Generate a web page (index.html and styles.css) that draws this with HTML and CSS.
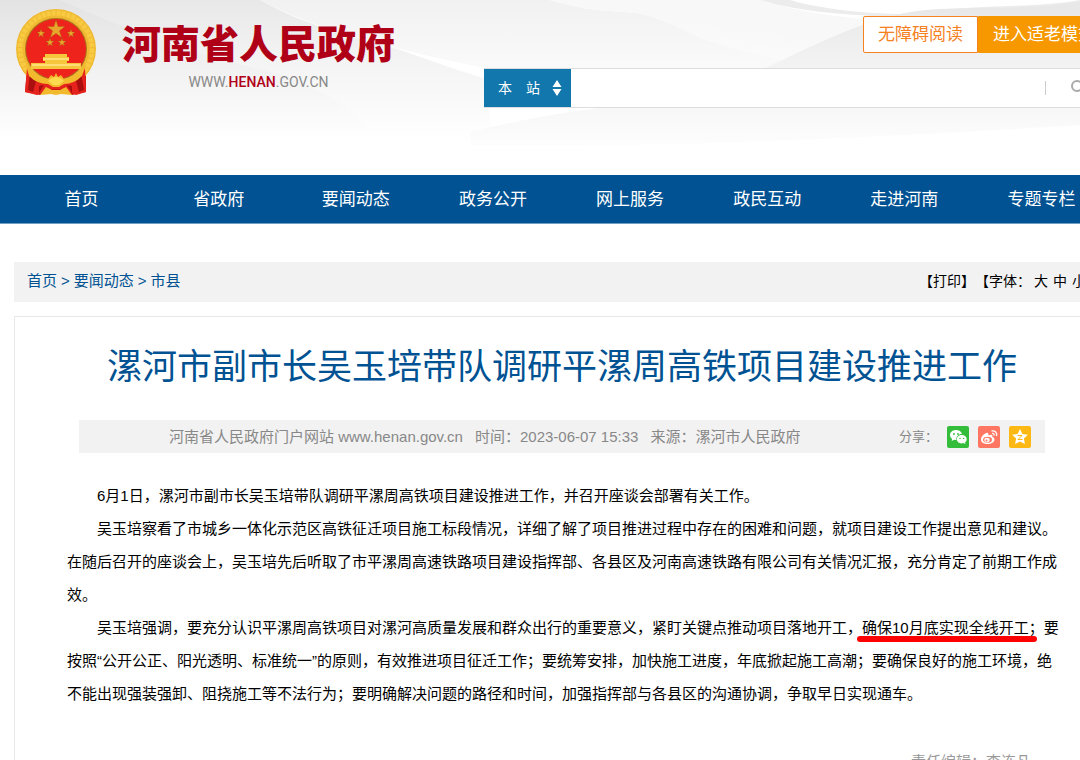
FILE: index.html
```html
<!DOCTYPE html>
<html lang="zh-CN">
<head>
<meta charset="utf-8">
<meta name="viewport" content="width=device-width, initial-scale=1">
<title>漯河市副市长吴玉培带队调研平漯周高铁项目建设推进工作</title>
<link rel="stylesheet" href="styles.css">
</head>
<body>
<header class="site-header">
  <svg class="header-bg" viewBox="0 0 1080 175" preserveAspectRatio="none" aria-hidden="true">
    <defs>
      <linearGradient id="g1" gradientUnits="userSpaceOnUse" x1="0" y1="0" x2="0" y2="140"><stop offset="0" stop-color="#e3e3e3"/><stop offset=".45" stop-color="#f0f0f0"/><stop offset="1" stop-color="#fff"/></linearGradient>
      <linearGradient id="g2" gradientUnits="userSpaceOnUse" x1="0" y1="0" x2="0" y2="140"><stop offset="0" stop-color="#e8e8e8"/><stop offset=".45" stop-color="#f4f4f4"/><stop offset="1" stop-color="#fff"/></linearGradient>
      <linearGradient id="g3" gradientUnits="userSpaceOnUse" x1="0" y1="0" x2="0" y2="90"><stop offset="0" stop-color="#f1f1f1"/><stop offset="1" stop-color="#fdfdfd"/></linearGradient>
      <linearGradient id="g4" gradientUnits="userSpaceOnUse" x1="550" y1="0" x2="540" y2="70"><stop offset="0" stop-color="#f8f8f8"/><stop offset="1" stop-color="#fff"/></linearGradient>
      <linearGradient id="g5" gradientUnits="userSpaceOnUse" x1="0" y1="8" x2="0" y2="72"><stop offset="0" stop-color="#e8e8e8"/><stop offset="1" stop-color="#f4f4f4"/></linearGradient>
      <linearGradient id="g6" gradientUnits="userSpaceOnUse" x1="0" y1="107" x2="0" y2="146"><stop offset="0" stop-color="#f7f7f7"/><stop offset="1" stop-color="#fdfdfd"/></linearGradient>
    </defs>
    <path fill="url(#g2)" d="M0 0H260C310 28 360 38 400 50C430 60 455 70 490 80V140H0Z"/>
    <path fill="url(#g1)" d="M0 0H60C130 32 210 58 270 72C310 82 350 105 380 140H0Z"/>
    <path fill="url(#g3)" d="M260 0H550C575 8 600 11 625 12C660 14 680 30 710 41C750 54 790 60 820 68H484C440 58 330 38 260 0Z"/>
    <path fill="url(#g4)" d="M550 0H760C800 12 840 18 880 20L850 68H820C780 60 740 52 710 41C680 30 660 14 625 12C600 11 575 8 550 0Z"/>
    <path fill="#ececec" d="M760 0H1080V3C1030 10 960 5 885 17C840 14 800 12 760 0Z"/>
    <path fill="#fff" d="M790 0H1080C1030 9 960 4 900 14C860 13 820 9 790 0Z"/>
    <path fill="url(#g5)" d="M765 68C830 38 880 11 940 9C1000 7 1040 8 1080 2V68Z"/>
    <path fill="url(#g6)" d="M470 132C520 120 560 113 605 107H1080V125C900 136 700 147 472 146Z"/>
  </svg>
  <div class="header-inner">
    <a class="brand" href="#">
      <svg class="emblem" viewBox="0 0 82 88" role="img" aria-label="国徽">
        <path fill="#c91512" d="M12 61L10 84L25 87L31 83L51 83L57 87L71 84L71 61Z"/>
        <circle cx="41" cy="41" r="40" fill="#f0b932"/>
        <circle cx="41" cy="41" r="36" fill="none" stroke="#f8ca42" stroke-width="5" stroke-dasharray="4 1"/>
        <circle cx="41" cy="41" r="31" fill="#a8741d"/>
        <circle cx="41" cy="41" r="30" fill="#ee241c"/>
        <g fill="#e8a52c" stroke="#a64b12" stroke-width=".4">
          <path d="M41 12L43.200 18.600H50L44.500 22.800L46.600 29.500L41 25.400L35.400 29.500L37.500 22.800L32 18.600H38.800Z"/>
          <path d="M26 21l1 3h3.200l-2.600 2 1 3-2.600-1.800-2.600 1.800 1-3-2.600-2H25zM56 21l1 3h3.200l-2.600 2 1 3-2.600-1.800-2.600 1.800 1-3-2.600-2H55zM35 30l1 3h3.200l-2.600 2 1 3-2.600-1.800-2.600 1.800 1-3-2.600-2H34zM47 30l1 3h3.200l-2.600 2 1 3-2.600-1.800-2.600 1.800 1-3-2.600-2H46z"/>
        </g>
        <path fill="#f6c63d" d="M30 46H52V49H54V53H52V55H66V61H16V55H30V53H28V49H30Z"/>
        <path fill="#ffdf75" d="M28 50H54V52H28ZM17 56H65V58H17Z"/>
        <path fill="#e5221b" d="M12 60L21 70L34 76H48L61 70L70 60L71 84L61 87L49 81H33L22 87L10 84Z"/>
        <path fill="#a90f0f" d="M15 65L21 73L18 84L13 82ZM66 65L61 73L64 84L69 82ZM24 78L29 77L24 85ZM57 78L52 77L57 85Z"/>
        <path fill="#f2b92d" d="M11 57Q18 68 33 71L36 67L39 69L41 65L43 69L46 67L49 71Q64 68 71 57L67 68Q59 76 49 76L44 79H38L33 76Q22 76 14 68ZM25 87L31 79L37 82H45L51 79L57 87L46 86L41 87L36 86Z"/>
        <path fill="#ffd94e" d="M33 73Q41 65 49 73L44 77H38Z"/>
      </svg>
      <span class="brand-text">
        <span class="brand-name">河南省人民政府</span>
        <span class="brand-url">WWW.<b>HENAN</b>.GOV.CN</span>
      </span>
    </a>
    <div class="header-tools">
      <div class="modes">
        <button type="button" class="mode">无障碍阅读</button><button type="button" class="mode mode-elder">进入适老模式</button>
      </div>
      <form class="search">
        <div class="scope">
          <select class="scope-select" aria-label="搜索范围"><option>本　站</option></select>
          <svg class="scope-arrows" viewBox="0 0 10 16" aria-hidden="true"><path fill="#fff" d="M5 0L9.500 7H.5ZM.5 9H9.500L5 16Z"/></svg>
        </div>
        <input class="search-input" type="text" aria-label="搜索关键词">
        <button class="search-button" type="submit" aria-label="搜索">
          <svg viewBox="0 0 18 18" width="18" height="18" aria-hidden="true"><g fill="none" stroke="#aaa" stroke-width="2"><circle cx="7" cy="7" r="5"/><path d="M11 11L16 16"/></g></svg>
        </button>
      </form>
    </div>
  </div>
</header>
<nav class="main-nav">
  <div class="nav-inner">
    <a href="#">首页</a><a href="#">省政府</a><a href="#">要闻动态</a><a href="#">政务公开</a><a href="#">网上服务</a><a href="#">政民互动</a><a href="#">走进河南</a><a href="#">专题专栏</a>
  </div>
</nav>
<main class="page">
  <div class="crumb-bar">
    <div class="crumbs"><a href="#">首页</a><span>&gt;</span><a href="#">要闻动态</a><span>&gt;</span><a href="#">市县</a></div>
    <div class="page-tools"><button type="button">【打印】</button><span class="size-label">【字体：</span><button type="button" class="size">大</button><button type="button" class="size">中</button><button type="button" class="size">小</button><span>】</span></div>
  </div>
  <article class="article">
    <h1 class="title">漯河市副市长吴玉培带队调研平漯周高铁项目建设推进工作</h1>
    <div class="meta">
      <div class="meta-info"><span>河南省人民政府门户网站 www.henan.gov.cn</span><span>时间：2023-06-07 15:33</span><span>来源：漯河市人民政府</span></div>
      <div class="share">
        <span>分享：</span>
        <button type="button" class="share-button wechat" aria-label="微信">
          <svg viewBox="0 0 22 22" aria-hidden="true"><path fill="#fff" d="M9 4C5.500 4 3 6.200 3 9c0 1.700.9 3 2.200 3.900L4.600 15l2.500-1.200c.8.2 1.500.2 2.300.2C8.800 10.500 11.500 8 15 8 14.400 5.600 12 4 9 4Z"/><path fill="#fff" d="M14.800 9c-2.800 0-5 1.900-5 4.200s2.200 4.200 5 4.200c.6 0 1.200-.1 1.700-.3l2 1-.5-1.800c1.100-.8 1.700-1.900 1.700-3.100 0-2.300-2.100-4.200-4.900-4.200Z"/><g fill="#34bd3b"><circle cx="7" cy="8" r=".9"/><circle cx="11" cy="8" r=".9"/><circle cx="13" cy="12.400" r=".7"/><circle cx="16.600" cy="12.400" r=".7"/></g></svg>
        </button>
        <button type="button" class="share-button weibo" aria-label="微博">
          <svg viewBox="0 0 22 22" aria-hidden="true"><path fill="#fff" d="M10 7C9.500 5.500 3 9 3 13.500 3 16.500 6 18 9.500 18c4 0 7-2 7-4.500 0-1.500-1-2.300-2.200-2.600.7-2-.8-2.800-3.800-1.400C10.600 8.500 10.300 7.600 10 7Z"/><ellipse cx="9.500" cy="13.800" rx="4.500" ry="3" fill="#ff7763"/><ellipse cx="9" cy="14" rx="2.700" ry="2.200" fill="#fff"/><circle cx="8.500" cy="14.400" r="1" fill="#ff7763"/><path fill="none" stroke="#fff" stroke-width="1.300" d="M13.500 5c3.500-.8 6 1.800 4.900 5M14 7.400c1.500-.2 2.500.8 2.100 2.200"/></svg>
        </button>
        <button type="button" class="share-button qzone" aria-label="QQ空间">
          <svg viewBox="0 0 22 22" aria-hidden="true"><path fill="#fff" d="M11 3l2.400 5 5.500.7-4 3.800 1 5.500-4.900-2.600L6.100 18l1-5.500-4-3.800L8.600 8Z"/><path fill="none" stroke="#fdb813" stroke-width="1" d="M8.500 9.500h4.500L9 13.500h4.500"/></svg>
        </button>
      </div>
    </div>
    <div class="prose">
      <p>6月1日，漯河市副市长吴玉培带队调研平漯周高铁项目建设推进工作，并召开座谈会部署有关工作。</p>
      <p>吴玉培察看了市城乡一体化示范区高铁征迁项目施工标段情况，详细了解了项目推进过程中存在的困难和问题，就项目建设工作提出意见和建议。在随后召开的座谈会上，吴玉培先后听取了市平漯周高速铁路项目建设指挥部、各县区及河南高速铁路有限公司有关情况汇报，充分肯定了前期工作成效。</p>
      <p>吴玉培强调，要充分认识平漯周高铁项目对漯河高质量发展和群众出行的重要意义，紧盯关键点推动项目落地开工，<span class="marked">确保10月底实现全线开工</span>；要按照“公开公正、阳光透明、标准统一”的原则，有效推进项目征迁工作；要统筹安排，加快施工进度，年底掀起施工高潮；要确保良好的施工环境，绝不能出现强装强卸、阻挠施工等不法行为；要明确解决问题的路径和时间，加强指挥部与各县区的沟通协调，争取早日实现通车。</p>
    </div>
    <p class="editor">责任编辑：李连凡</p>
  </article>
</main>
</body>
</html>
```

FILE: styles.css
```css
* { box-sizing: border-box; }
body {
  margin: 0;
  height: 100vh;
  overflow: hidden;
  background: #fff;
  color: #000;
  font: 15px/24px "Liberation Sans", "Noto Sans CJK SC", sans-serif;
}
a { color: inherit; text-decoration: none; }
button { margin: 0; padding: 0; border: 0; background: none; color: inherit; font: inherit; }
p { margin: 0; }

.site-header { position: relative; height: 175px; }
.header-bg { position: absolute; inset: 0; width: 100%; height: 100%; }
.header-inner {
  position: relative;
  display: flex;
  justify-content: space-between;
  margin: 0 -30px 0 14px;
}
.brand { display: flex; gap: 24px; padding-top: 8px; }
.emblem { width: 84px; height: 88px; }
.brand-text { display: flex; flex-direction: column; align-items: center; padding-top: 11px; }
.brand-name { color: #b00018; font-size: 39px; line-height: 52px; font-weight: 900; }
.brand-url { color: #888; font: 14px/22px Roboto, sans-serif; }
.brand-url b { color: #b00018; font-weight: 500; }

.header-tools { flex: 0 0 626px; padding-top: 16px; }
.modes { display: flex; justify-content: flex-end; font-size: 17px; line-height: 35px; }
.mode { padding: 0 14px; border: 1px solid #f5811f; border-radius: 2px 0 0 2px; background: #fff; color: #f5811f; white-space: nowrap; }
.mode-elder { border-color: #f79800; border-radius: 0 2px 2px 0; background: #f79800; color: #fff; }
.search { display: flex; height: 40px; margin-top: 15px; border: 1px solid #ddd; border-left: 0; background: #fff; }
.scope { position: relative; flex: 0 0 87px; background: #1177ad; }
.scope-select { width: 100%; height: 100%; padding: 0 14px 3px; border: 0; appearance: none; background: none; color: #fff; font: 14px/24px "Noto Sans CJK SC", sans-serif; }
.scope-arrows { position: absolute; top: 11px; right: 9px; width: 10px; height: 16px; pointer-events: none; }
.search-input { flex: 1; min-width: 0; border: 0; padding: 0 12px; background: none; font: inherit; }
.search-button { display: flex; align-items: center; align-self: center; height: 14px; padding-left: 24px; width: 64px; border-left: 1px solid #ccc; }

.main-nav { background: #005293; border-bottom: 1px solid #6f9fc5; color: #fff; font-size: 17px; line-height: 48px; }
.nav-inner { display: grid; grid-template-columns: repeat(8, 1fr); margin: 0 -30px 0 13px; padding-top: 1px; line-height: 47px; text-align: center; }

.page { margin: 38px -30px 0 14px; }
.crumb-bar { display: flex; align-items: center; justify-content: space-between; height: 40px; padding: 0 13px 2px; background: #f2f2f2; }
.crumbs { display: flex; gap: 4px; color: #005293; }
.page-tools { display: flex; margin-right: -8px; font-size: 14px; }
.size-label { margin-right: 3px; }
.page-tools .size { margin-right: 5px; }

.article { margin-top: 14px; padding: 0 52px; border: 1px solid #e8e8e8; }
.title { margin: 0; padding-top: 20px; color: #005293; font-size: 35px; line-height: 60px; font-weight: 400; text-align: center; white-space: nowrap; }
.meta { display: flex; align-items: center; justify-content: space-between; height: 33px; margin: 23px 12px 0; padding: 0 14px 0 90px; background: #f2f2f2; color: #888; }
.meta-info { display: flex; gap: 12px; white-space: nowrap; }
.share { display: flex; align-items: center; gap: 9px; font-size: 13px; }
.share-button { display: flex; width: 22px; height: 22px; border-radius: 2px; }
.share-button svg { width: 22px; height: 22px; }
.wechat { background: #34bd3b; }
.weibo { background: #ff7763; }
.qzone { background: #fdb813; }

.prose { margin: 26px -8px 0 0; line-height: 33px; }
.prose p { text-indent: 2em; }
.marked { position: relative; }
.marked::after { content: ""; position: absolute; left: -5px; right: -8px; bottom: -6px; height: 6px; border-radius: 3px; background: #f00; }
.editor { margin-top: 40px; padding: 0 26px 40px 0; color: #999; text-align: right; }
```
